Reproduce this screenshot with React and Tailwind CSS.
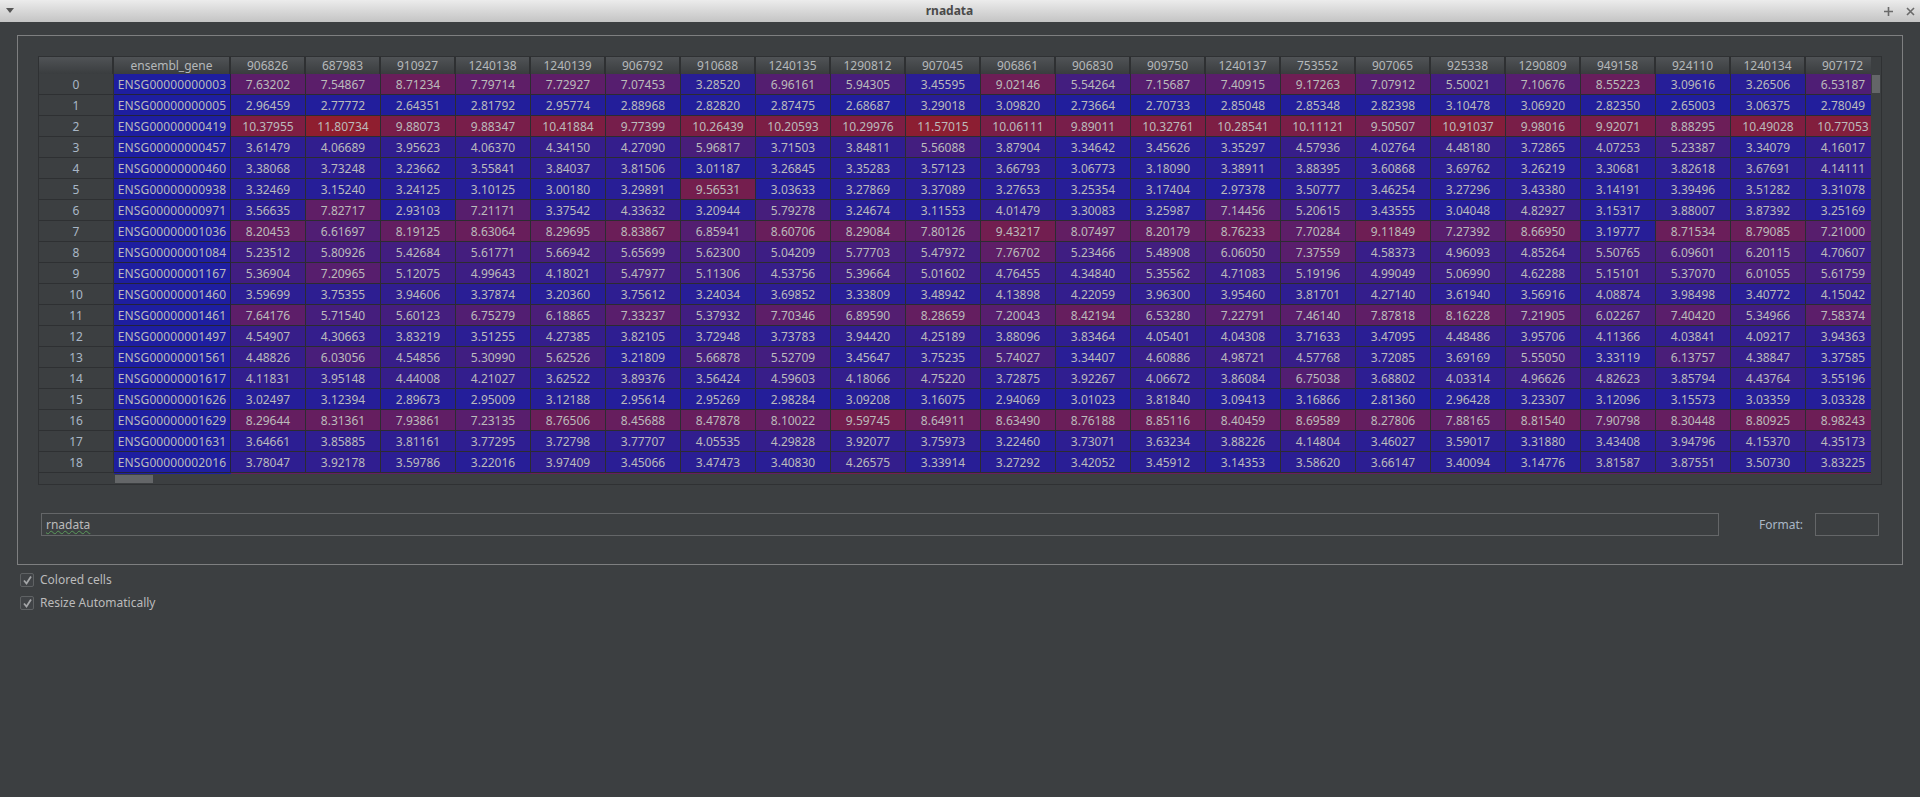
const headers = "906826 687983 910927 1240138 1240139 906792 910688 1240135 1290812 907045 906861 906830 909750 1240137 753552 907065 925338 1290809 949158 924110 1240134 907172".split(" ");
const genes = "00003 00005 00419 00457 00460 00938 00971 01036 01084 01167 01460 01461 01497 01561 01617 01626 01629 01631 02016".split(" ");
const rows = [
"7.63202 7.54867 8.71234 7.79714 7.72927 7.07453 3.28520 6.96161 5.94305 3.45595 9.02146 5.54264 7.15687 7.40915 9.17263 7.07912 5.50021 7.10676 8.55223 3.09616 3.26506 6.53187",
"2.96459 2.77772 2.64351 2.81792 2.95774 2.88968 2.82820 2.87475 2.68687 3.29018 3.09820 2.73664 2.70733 2.85048 2.85348 2.82398 3.10478 3.06920 2.82350 2.65003 3.06375 2.78049",
"10.37955 11.80734 9.88073 9.88347 10.41884 9.77399 10.26439 10.20593 10.29976 11.57015 10.06111 9.89011 10.32761 10.28541 10.11121 9.50507 10.91037 9.98016 9.92071 8.88295 10.49028 10.77053",
"3.61479 4.06689 3.95623 4.06370 4.34150 4.27090 5.96817 3.71503 3.84811 5.56088 3.87904 3.34642 3.45626 3.35297 4.57936 4.02764 4.48180 3.72865 4.07253 5.23387 3.34079 4.16017",
"3.38068 3.73248 3.23662 3.55841 3.84037 3.81506 3.01187 3.26845 3.35283 3.57123 3.66793 3.06773 3.18090 3.38911 3.88395 3.60868 3.69762 3.26219 3.30681 3.82618 3.67691 4.14111",
"3.32469 3.15240 3.24125 3.10125 3.00180 3.29891 9.56531 3.03633 3.27869 3.37089 3.27653 3.25354 3.17404 2.97378 3.50777 3.46254 3.27296 3.43380 3.14191 3.39496 3.51282 3.31078",
"3.56635 7.82717 2.93103 7.21171 3.37542 4.33632 3.20944 5.79278 3.24674 3.11553 4.01479 3.30083 3.25987 7.14456 5.20615 3.43555 3.04048 4.82927 3.15317 3.88007 3.87392 3.25169",
"8.20453 6.61697 8.19125 8.63064 8.29695 8.83867 6.85941 8.60706 8.29084 7.80126 9.43217 8.07497 8.20179 8.76233 7.70284 9.11849 7.27392 8.66950 3.19777 8.71534 8.79085 7.21000",
"5.23512 5.80926 5.42684 5.61771 5.66942 5.65699 5.62300 5.04209 5.77703 5.47972 7.76702 5.23466 5.48908 6.06050 7.37559 4.58373 4.96093 4.85264 5.50765 6.09601 6.20115 4.70607",
"5.36904 7.20965 5.12075 4.99643 4.18021 5.47977 5.11306 4.53756 5.39664 5.01602 4.76455 4.34840 5.35562 4.71083 5.19196 4.99049 5.06990 4.62288 5.15101 5.37070 6.01055 5.61759",
"3.59699 3.75355 3.94606 3.37874 3.20360 3.75612 3.24034 3.69852 3.33809 3.48942 4.13898 4.22059 3.96300 3.95460 3.81701 4.27140 3.61940 3.56916 4.08874 3.98498 3.40772 4.15042",
"7.64176 5.71540 5.60123 6.75279 6.18865 7.33237 5.37932 7.70346 6.89590 8.28659 7.20043 8.42194 6.53280 7.22791 7.46140 7.87818 8.16228 7.21905 6.02267 7.40420 5.34966 7.58374",
"4.54907 4.30663 3.83219 3.51255 4.27385 3.82105 3.72948 3.73783 3.94420 4.25189 3.88096 3.83464 4.05401 4.04308 3.71633 3.47095 4.48486 3.95706 4.11366 4.03841 4.09217 3.94363",
"4.48826 6.03056 4.54856 5.30990 5.62526 3.21809 5.66878 5.52709 3.45647 3.75235 5.74027 3.34407 4.60886 4.98721 4.57768 3.72085 3.69169 5.55050 3.33119 6.13757 4.38847 3.37585",
"4.11831 3.95148 4.44008 4.21027 3.62522 3.89376 3.56424 4.59603 4.18066 4.75220 3.72875 3.92267 4.06672 3.86084 6.75038 3.68802 4.03314 4.96626 4.82623 3.85794 4.43764 3.55196",
"3.02497 3.12394 2.89673 2.95009 3.12188 2.95614 2.95269 2.98284 3.09208 3.16075 2.94069 3.01023 3.81840 3.09413 3.16866 2.81360 2.96428 3.23307 3.12096 3.15573 3.03359 3.03328",
"8.29644 8.31361 7.93861 7.23135 8.76506 8.45688 8.47878 8.10022 9.59745 8.64911 8.63490 8.76188 8.85116 8.40459 8.69589 8.27806 7.88165 8.81540 7.90798 8.30448 8.80925 8.98243",
"3.64661 3.85885 3.81161 3.77295 3.72798 3.77707 4.05535 4.29828 3.92077 3.75973 3.22460 3.73071 3.63234 3.88226 4.14804 3.46027 3.59017 3.31880 3.43408 3.94796 4.15370 4.35173",
"3.78047 3.92178 3.59786 3.22016 3.97409 3.45066 3.47473 3.40830 4.26575 3.33914 3.27292 3.42052 3.45912 3.14353 3.58620 3.66147 3.40094 3.14776 3.81587 3.87551 3.50730 3.83225",
].map((r) => r.split(" "));

function cellColor(v) {
  const x = parseFloat(v);
  const r = Math.round(32 + (x - 2.64) * 12.1);
  const b = Math.round(x < 7.63 ? 157 - (x - 2.64) * 10.4 : 105 - (x - 7.63) * 13.9);
  return `rgb(${r},30,${b})`;
}

function Check() {
  return (
    <span className="flex h-[14px] w-[14px] shrink-0 items-center justify-center rounded-[2px] border border-[#5f6264] bg-[#404346]">
      <svg width="11" height="11" viewBox="0 0 11 11" fill="none">
        <path d="M2 5.5 L4.5 8.5 L9 1.5" stroke="#a4a6a8" strokeWidth="1.8" />
      </svg>
    </span>
  );
}

function HeaderCell({ className, children }) {
  return (
    <div className={`flex h-[17px] shrink-0 items-center justify-center border-r-2 border-[#2e3032] bg-gradient-to-b from-[#505356] to-[#3a3d3f] text-[12px] leading-none text-[#b5b8ba] ${className}`}>
      {children}
    </div>
  );
}

export default function App() {
  return (
    <div className="flex h-[797px] w-[1920px] flex-col overflow-hidden bg-[#3c3f41] font-['Noto_Sans',sans-serif] text-[12px] text-[#bbbbbb]">
      <div className="flex h-[22px] shrink-0 items-center justify-between bg-gradient-to-b from-[#ececec] to-[#c4c4c4] pl-[6px] pr-[5px]">
        <svg width="9" height="6" viewBox="0 0 9 6"><path d="M0 0 H8 L4 5 Z" fill="#555" /></svg>
        <span className="text-[12px] font-bold text-[#4a4a4a]">rnadata</span>
        <div className="flex items-center gap-[13px]">
          <svg width="9" height="9" viewBox="0 0 9 9"><path d="M4.5 0 V9 M0 4.5 H9" stroke="#6a6a6a" strokeWidth="1.6" /></svg>
          <svg width="9" height="9" viewBox="0 0 9 9"><path d="M1 1 L8 8 M8 1 L1 8" stroke="#6a6a6a" strokeWidth="1.6" /></svg>
        </div>
      </div>

      <div className="ml-[17px] mt-[13px] h-[530px] w-[1886px] shrink-0 border border-[#7e7f80] pl-[20px] pt-[20px]">
        <div className="h-[429px] w-[1844px] overflow-hidden border border-[#2f3133]">
          <div className="flex h-[417px]">
            <div className="w-[1832px] overflow-hidden">
              <div className="flex w-max">
                <HeaderCell className="w-[75px]" />
                <HeaderCell className="w-[117px]">ensembl_gene</HeaderCell>
                {headers.map((h) => (
                  <HeaderCell key={h} className="w-[75px]">{h}</HeaderCell>
                ))}
              </div>
              {rows.map((row, i) => (
                <div key={i} className="flex h-[21px] w-max">
                  <div className="flex w-[75px] shrink-0 items-center justify-center border-b border-r border-[#2e3032] bg-[#3c3f41] pt-[2px] text-[#a9b7c6]">{i}</div>
                  <div className="flex w-[117px] shrink-0 items-center justify-center border-b border-r border-[#23233a] bg-[#1e1ea0] pt-[2px] tracking-[0.12px] text-[#bbbbbb]">ENSG000000{genes[i]}</div>
                  {row.map((v, j) => (
                    <div key={j} style={{ backgroundColor: cellColor(v) }} className="flex w-[75px] shrink-0 items-center justify-center border-b border-r border-[#2c2c30] pt-[2px]">{v}</div>
                  ))}
                </div>
              ))}
              <div className="flex h-[1px] w-max">
                <div className="w-[75px] shrink-0 bg-[#3c3f41]" />
                <div className="w-[117px] shrink-0 bg-[#1e1ea0]" />
                {rows[16].map((v, j) => (
                  <div key={j} style={{ backgroundColor: cellColor(v) }} className="w-[75px] shrink-0" />
                ))}
              </div>
            </div>
            <div className="w-[10px] shrink-0 pl-[1px] pt-[18px]">
              <div className="h-[18px] w-[8px] bg-[#646668]" />
            </div>
          </div>
          <div className="h-[10px] pl-[76px] pt-[1px]">
            <div className="h-[8px] w-[38px] bg-[#646668]" />
          </div>
        </div>

        <div className="mt-[28px] flex items-center">
          <div className="ml-[3px] flex h-[23px] w-[1678px] items-center border border-[#646668] pl-[4px]">
            <span className="underline decoration-wavy decoration-[#5a9a5a] decoration-1 underline-offset-1 text-[#bbbbbb]">rnadata</span>
          </div>
          <span className="ml-[40px] text-[#a9b7c6]">Format:</span>
          <div className="ml-[12px] h-[23px] w-[64px] border border-[#646668]" />
        </div>
      </div>

      <div className="ml-[20px] mt-[8px] flex flex-col gap-[9px]">
        <label className="flex h-[14px] items-center gap-[6px]"><Check />Colored cells</label>
        <label className="flex h-[14px] items-center gap-[6px]"><Check />Resize Automatically</label>
      </div>
    </div>
  );
}
